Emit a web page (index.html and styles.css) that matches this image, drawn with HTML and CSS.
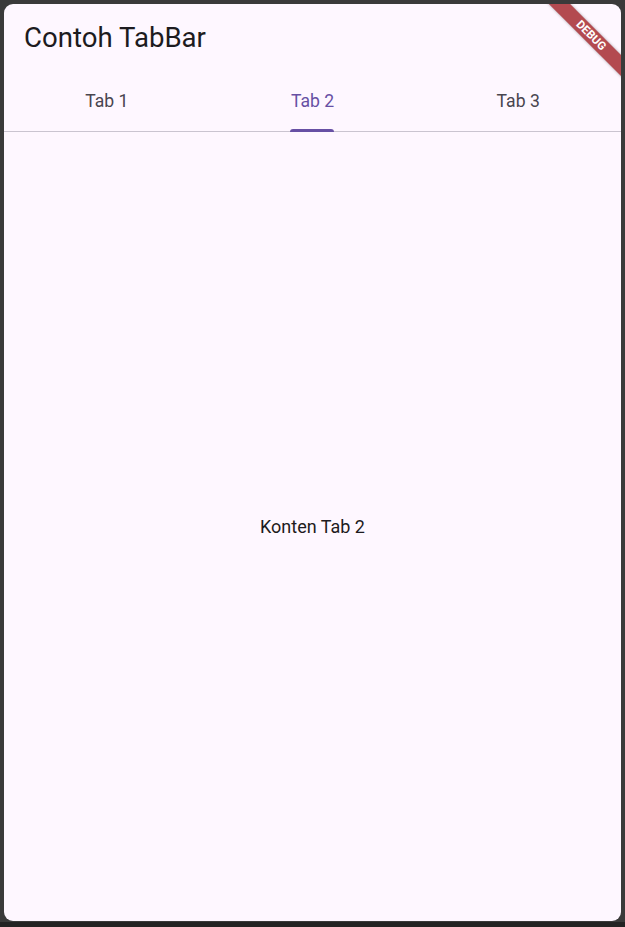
FILE: index.html
```html
<!DOCTYPE html>
<html>
<head>
<meta charset="utf-8">
<link rel="stylesheet" href="styles.css">
</head>
<body>
<div class="frame">
  <div class="app">
    <header class="appbar">
      <h1 class="title">Contoh TabBar</h1>
    </header>
    <nav class="tabbar">
      <div class="tab">Tab 1</div>
      <div class="tab active"><span class="label">Tab 2</span></div>
      <div class="tab">Tab 3</div>
    </nav>
    <main class="content">
      <p class="text">Konten Tab 2</p>
    </main>
    <div class="banner">DEBUG</div>
  </div>
  <div class="bottom"></div>
</div>
</body>
</html>
```

FILE: styles.css
```css
html, body {
  margin: 0;
  padding: 0;
  height: 100%;
}
body {
  background: #3a3a3a;
  font-family: Roboto, "Liberation Sans", sans-serif;
  overflow: hidden;
}
.frame {
  height: 927px;
  display: flex;
  flex-direction: column;
  padding: 4px 4px 0 4px;
  box-sizing: border-box;
}
.app {
  position: relative;
  overflow: hidden;
  height: 917px;
  background: #fef7ff;
  border-radius: 9px;
  display: flex;
  flex-direction: column;
}
.bottom {
  margin-top: 1px;
  flex: 1;
  background: #232323;
  margin-left: -4px;
  margin-right: -4px;
}
.appbar {
  height: 64px;
  display: flex;
  align-items: center;
  padding: 0 20px;
  box-sizing: border-box;
}
.title {
  margin: 0;
  font-size: 27.6px;
  font-weight: 400;
  color: #1d1b20;
  line-height: 1;
  padding-top: 4px;
}
.tabbar {
  height: 64px;
  display: grid;
  grid-template-columns: 1fr 1fr 1fr;
  border-bottom: 1px solid #cac4d0;
  box-sizing: border-box;
}
.tab {
  display: flex;
  align-items: center;
  justify-content: center;
  font-size: 17.6px;
  color: #49454f;
  padding-top: 3px;
  position: relative;
}
.tab.active {
  color: #6750a4;
}
.tab.active::after {
  content: "";
  position: absolute;
  bottom: -1px;
  left: 50%;
  width: 44px;
  margin-left: -22px;
  height: 3px;
  background: #6750a4;
  border-radius: 3px 3px 0 0;
}
.content {
  flex: 1;
  display: flex;
  align-items: center;
  justify-content: center;
}
.text {
  margin: 0;
  font-size: 18px;
  color: #1d1b20;
}
.banner {
  position: absolute;
  top: 24px;
  right: -30px;
  width: 120px;
  height: 15px;
  line-height: 15px;
  text-align: center;
  background: #b34a50;
  color: #fff;
  font-family: Roboto, "Liberation Sans", sans-serif;
  font-weight: 700;
  font-size: 11.5px;
  transform: rotate(45deg);
  box-shadow: 0 0 3px rgba(0,0,0,0.35);
}
```
